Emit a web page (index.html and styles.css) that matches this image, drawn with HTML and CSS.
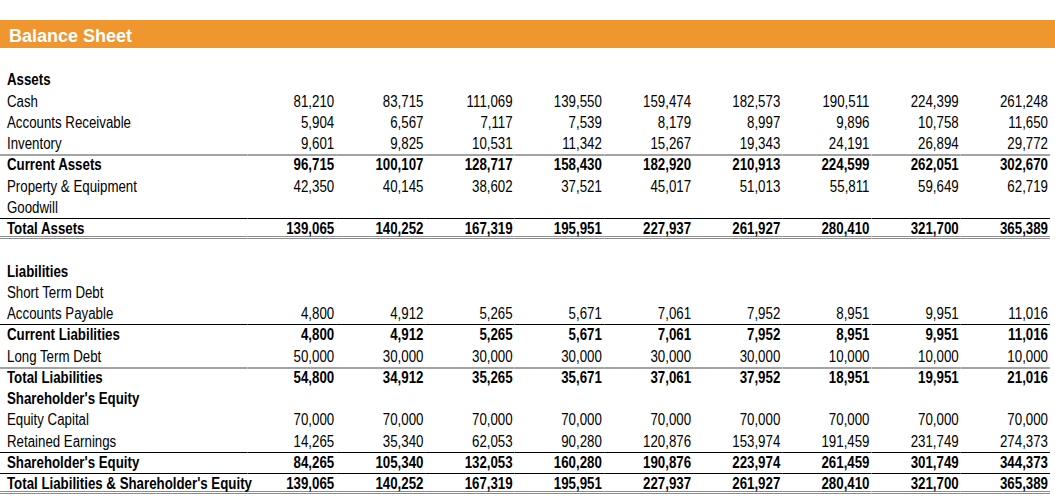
FILE: index.html
```html
<!DOCTYPE html>
<html lang="en">
<head>
<meta charset="utf-8">
<title>Balance Sheet</title>
<link rel="stylesheet" href="styles.css">
</head>
<body>
<div class="sheet">
  <div class="titlebar">Balance Sheet</div>
  <table class="bs">
    <colgroup>
      <col class="c-label">
      <col class="c-num"><col class="c-num"><col class="c-num"><col class="c-num"><col class="c-num"><col class="c-num"><col class="c-num"><col class="c-num"><col class="c-num">
    </colgroup>
    <tbody>
      <tr class="blank"><td></td><td></td><td></td><td></td><td></td><td></td><td></td><td></td><td></td><td></td></tr>
      <tr class="head"><td>Assets</td><td></td><td></td><td></td><td></td><td></td><td></td><td></td><td></td><td></td></tr>
      <tr><td>Cash</td><td>81,210</td><td>83,715</td><td>111,069</td><td>139,550</td><td>159,474</td><td>182,573</td><td>190,511</td><td>224,399</td><td>261,248</td></tr>
      <tr><td>Accounts Receivable</td><td>5,904</td><td>6,567</td><td>7,117</td><td>7,539</td><td>8,179</td><td>8,997</td><td>9,896</td><td>10,758</td><td>11,650</td></tr>
      <tr><td>Inventory</td><td>9,601</td><td>9,825</td><td>10,531</td><td>11,342</td><td>15,267</td><td>19,343</td><td>24,191</td><td>26,894</td><td>29,772</td></tr>
      <tr class="bold line-gray"><td>Current Assets</td><td>96,715</td><td>100,107</td><td>128,717</td><td>158,430</td><td>182,920</td><td>210,913</td><td>224,599</td><td>262,051</td><td>302,670</td></tr>
      <tr><td>Property &amp; Equipment</td><td>42,350</td><td>40,145</td><td>38,602</td><td>37,521</td><td>45,017</td><td>51,013</td><td>55,811</td><td>59,649</td><td>62,719</td></tr>
      <tr><td>Goodwill</td><td></td><td></td><td></td><td></td><td></td><td></td><td></td><td></td><td></td></tr>
      <tr class="bold line-black total"><td>Total Assets</td><td>139,065</td><td>140,252</td><td>167,319</td><td>195,951</td><td>227,937</td><td>261,927</td><td>280,410</td><td>321,700</td><td>365,389</td></tr>
      <tr class="blank"><td></td><td></td><td></td><td></td><td></td><td></td><td></td><td></td><td></td><td></td></tr>
      <tr class="head"><td>Liabilities</td><td></td><td></td><td></td><td></td><td></td><td></td><td></td><td></td><td></td></tr>
      <tr><td>Short Term Debt</td><td></td><td></td><td></td><td></td><td></td><td></td><td></td><td></td><td></td></tr>
      <tr><td>Accounts Payable</td><td>4,800</td><td>4,912</td><td>5,265</td><td>5,671</td><td>7,061</td><td>7,952</td><td>8,951</td><td>9,951</td><td>11,016</td></tr>
      <tr class="bold line-black"><td>Current Liabilities</td><td>4,800</td><td>4,912</td><td>5,265</td><td>5,671</td><td>7,061</td><td>7,952</td><td>8,951</td><td>9,951</td><td>11,016</td></tr>
      <tr><td>Long Term Debt</td><td>50,000</td><td>30,000</td><td>30,000</td><td>30,000</td><td>30,000</td><td>30,000</td><td>10,000</td><td>10,000</td><td>10,000</td></tr>
      <tr class="bold line-gray"><td>Total Liabilities</td><td>54,800</td><td>34,912</td><td>35,265</td><td>35,671</td><td>37,061</td><td>37,952</td><td>18,951</td><td>19,951</td><td>21,016</td></tr>
      <tr class="head"><td>Shareholder's Equity</td><td></td><td></td><td></td><td></td><td></td><td></td><td></td><td></td><td></td></tr>
      <tr><td>Equity Capital</td><td>70,000</td><td>70,000</td><td>70,000</td><td>70,000</td><td>70,000</td><td>70,000</td><td>70,000</td><td>70,000</td><td>70,000</td></tr>
      <tr><td>Retained Earnings</td><td>14,265</td><td>35,340</td><td>62,053</td><td>90,280</td><td>120,876</td><td>153,974</td><td>191,459</td><td>231,749</td><td>274,373</td></tr>
      <tr class="bold line-black"><td>Shareholder's Equity</td><td>84,265</td><td>105,340</td><td>132,053</td><td>160,280</td><td>190,876</td><td>223,974</td><td>261,459</td><td>301,749</td><td>344,373</td></tr>
      <tr class="bold line-black total"><td>Total Liabilities &amp; Shareholder's Equity</td><td>139,065</td><td>140,252</td><td>167,319</td><td>195,951</td><td>227,937</td><td>261,927</td><td>280,410</td><td>321,700</td><td>365,389</td></tr>
    </tbody>
  </table>
</div>
</body>
</html>
```
FILE: styles.css
```css
html, body {
  margin: 0;
  padding: 0;
  background: #ffffff;
}

.sheet {
  width: 1055px;
  padding-top: 20px;
  overflow: hidden;
  font-family: "Liberation Sans", Arial, sans-serif;
  color: #000000;
}

.titlebar {
  height: 28px;
  box-sizing: border-box;
  padding: 5px 0 0 9px;
  line-height: 23px;
  background: #ef962f;
  color: #ffffff;
  font-weight: bold;
  font-size: 18px;
}

/* Arial Narrow is not available: lay the sheet out at full width
   and condense it horizontally, as Arial Narrow does. */
.bs {
  width: 1265.06px;
  table-layout: fixed;
  border-collapse: separate;
  border-spacing: 0;
  font-size: 16px;
  transform: scaleX(0.83);
  transform-origin: 0 0;
}

.c-label {
  width: 297.59px;
}

.c-num {
  width: 107.497px;
}

.bs td {
  height: 21.25px;
  padding: 0 2.41px 0 0;
  line-height: 21.25px;
  white-space: nowrap;
  text-align: right;
  vertical-align: middle;
  overflow: visible;
}

.bs td:first-child {
  padding: 0 0 0 8.43px;
  text-align: left;
}

.bs .head td,
.bs .bold td {
  font-weight: bold;
}

.bs .line-gray td {
  box-shadow: inset 0 2px 0 #a3a3a3;
}

.bs .line-black td {
  box-shadow: inset 0 1px 0 #000000;
}

.bs .line-black.total td {
  box-shadow: inset 0 1px 0 #000000, inset 0 -1px 0 #8c8c8c, inset 0 -2px 0 #ffffff, inset 0 -3px 0 #8c8c8c;
}
```
